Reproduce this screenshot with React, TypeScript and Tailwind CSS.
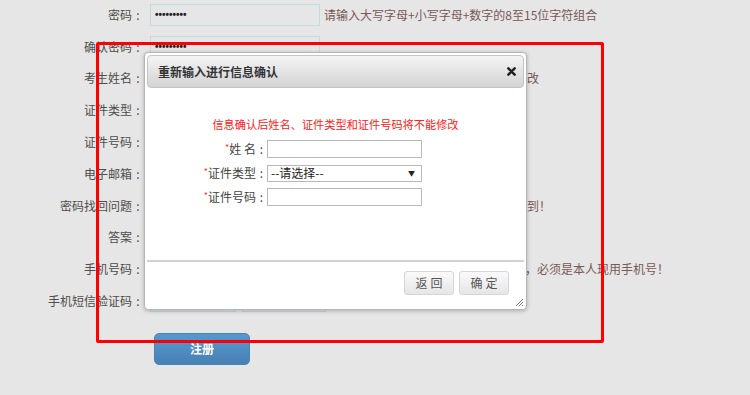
const font = { fontFamily: '"Noto Sans CJK SC", "Noto Sans", sans-serif' }

interface Row {
  label: string
  input?: 'password' | 'text' | 'double' | 'none'
  hint?: string
  hintOffset?: string
}

const rows: Row[] = [
  { label: '密码', input: 'password', hint: '请输入大写字母+小写字母+数字的8至15位字符组合', hintOffset: 'ml-[4px]' },
  { label: '确认密码', input: 'password' },
  { label: '考生姓名', input: 'text', hint: '改', hintOffset: 'ml-[207px]' },
  { label: '证件类型', input: 'text' },
  { label: '证件号码', input: 'text' },
  { label: '电子邮箱', input: 'text' },
  { label: '密码找回问题', input: 'text', hint: '到！', hintOffset: 'ml-[207px]' },
  { label: '答案', input: 'text' },
  { label: '手机号码', input: 'text', hint: '，必须是本人现用手机号！', hintOffset: 'ml-[205px]' },
  { label: '手机短信验证码', input: 'double' },
]

function PageInput({ kind }: { kind: Row['input'] }) {
  if (kind === 'double') {
    return (
      <div className="flex gap-[6px]">
        <div className="w-[86px] h-[22px] border border-[#bfdbe3] bg-[#e6e6e6]" />
        <div className="w-[84px] h-[22px] border border-[#bfdbe3] bg-[#e6e6e6]" />
      </div>
    )
  }
  return (
    <div
      className="w-[170px] h-[22px] border border-[#bfdbe3] bg-[#e6e6e6] flex items-center pl-[4px] text-[10px] font-bold text-[#222]"
      style={{ fontFamily: '"Liberation Sans", sans-serif' }}
    >
      {kind === 'password' ? '•••••••••' : ''}
    </div>
  )
}

function Field({ label, children }: { label: string; children: React.ReactNode }) {
  return (
    <div className="flex items-center h-[24px]">
      <div className="w-[120px] flex justify-end items-center text-[12px] text-[#444]">
        <span className="text-[#ff3333] text-[9px] self-start mt-[1px]">*</span>
        <span>{label}</span>
        <span className="w-[11px] text-center">:</span>
      </div>
      {children}
    </div>
  )
}

function Dialog() {
  return (
    <div className="absolute left-[144px] top-[52px] w-[383px] h-[258px] bg-white border border-[#b5b5b5] rounded-[4px] shadow-[0_1px_4px_rgba(0,0,0,0.25)] p-[2px] flex flex-col">
      <div className="h-[33px] rounded-[4px] border border-[#c4c4c4] bg-gradient-to-b from-[#f4f4f4] to-[#d4d4d4] flex items-center justify-between pl-[10px] pr-[7px]">
        <span className="text-[12px] font-bold text-[#333]">重新输入进行信息确认</span>
        <svg width="9" height="9" viewBox="0 0 10 10">
          <path d="M1.5 1.5 L8.5 8.5 M8.5 1.5 L1.5 8.5" stroke="#222" strokeWidth="2.8" strokeLinecap="round" />
        </svg>
      </div>
      <div className="flex-1 flex flex-col">
        <div className="mt-[28px] text-center text-[11.2px] text-[#ff2020] leading-[16px]">
          信息确认后姓名、证件类型和证件号码将不能修改
        </div>
        <div className="mt-[5px] flex flex-col">
          <Field label="姓 名">
            <div className="w-[155px] h-[18px] border border-[#b8b8b8] bg-white" />
          </Field>
          <Field label="证件类型">
            <div className="w-[155px] h-[17px] border border-[#b8b8b8] bg-white flex items-center justify-between pl-[3px] pr-[6px] text-[12px] text-[#222]">
              <span>--请选择--</span>
              <span className="text-[7px]">▼</span>
            </div>
          </Field>
          <Field label="证件号码">
            <div className="w-[155px] h-[18px] border border-[#b8b8b8] bg-white" />
          </Field>
        </div>
      </div>
      <div className="h-[2px] bg-[#d2d2d2]" />
      <div className="h-[45px] flex justify-end pr-[15px] pt-[9px] relative">
        <div className="flex gap-[5px]">
          <button className="w-[50px] h-[24px] rounded-[3px] border border-[#d6d6d6] bg-gradient-to-b from-[#fafafa] to-[#e6e6e6] text-[12px] text-[#555] tracking-[3px] pl-[3px]">
            返回
          </button>
          <button className="w-[50px] h-[24px] rounded-[3px] border border-[#d6d6d6] bg-gradient-to-b from-[#fafafa] to-[#e6e6e6] text-[12px] text-[#555] tracking-[3px] pl-[3px]">
            确定
          </button>
        </div>
        <svg className="absolute right-0 bottom-0" width="10" height="10" viewBox="0 0 10 10">
          <path d="M9 2 L2 9 M9 5 L5 9 M9 8 L8 9" stroke="#777" strokeWidth="1" />
        </svg>
      </div>
    </div>
  )
}

export default function App() {
  return (
    <div className="relative w-[750px] h-[395px] overflow-hidden bg-[#e6e6e6]" style={font}>
      <div className="flex flex-col -mt-[1px]">
        {rows.map((row) => (
          <div key={row.label} className="h-[31.8px] flex items-center">
            <div className="w-[144px] flex justify-end text-[12px] text-[#4d4d4d]">
              <span>{row.label}</span>
              <span className="w-[12px] text-center">:</span>
            </div>
            <div className="ml-[6px]">
              <PageInput kind={row.input} />
            </div>
            {row.hint && (
              <span className={`${row.hintOffset} text-[12px] text-[#7a5858]`}>{row.hint}</span>
            )}
          </div>
        ))}
        <div className="mt-[16px] ml-[154px]">
          <button className="w-[96px] h-[32px] rounded-[5px] bg-gradient-to-b from-[#5898cf] to-[#4781b5] border border-[#4a82b4] text-white text-[12px] font-bold">
            注册
          </button>
        </div>
      </div>

      <Dialog />

      <div className="absolute left-[96px] top-[42px] w-[508px] h-[301px] border-[3px] border-[#ff0000] rounded-[2px] pointer-events-none" />
    </div>
  )
}
